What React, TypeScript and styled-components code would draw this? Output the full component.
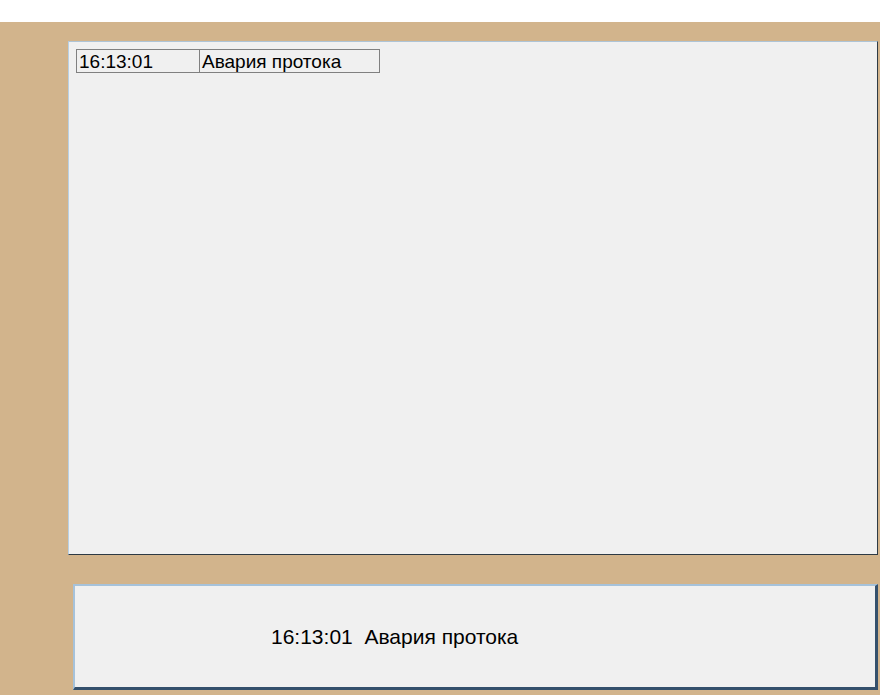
import React from "react";
import styled, { createGlobalStyle } from "styled-components";

const Global = createGlobalStyle`
  html, body { margin: 0; padding: 0; background: #ffffff; }
  body { font-family: "Liberation Sans", Arial, sans-serif; overflow: hidden; }
`;

const Screen = styled.div`
  width: 880px;
  height: 695px;
  display: flex;
  flex-direction: column;
  background: #ffffff;
`;

const Stage = styled.div`
  margin-top: 22px;
  flex: 1;
  background: #d2b48c;
  display: flex;
  flex-direction: column;
  padding: 19px 2px 0 68px;
`;

const LogPanel = styled.div`
  box-sizing: border-box;
  width: 810px;
  height: 514px;
  background: #f0f0f0;
  border-top: 1px solid #aec4d6;
  border-left: 1px solid #b8d0e4;
  border-right: 1px solid #2e3a44;
  border-bottom: 1px solid #2e3a44;
  padding: 7px 0 0 7px;
`;

const Table = styled.div`
  display: grid;
  grid-template-columns: 123px 181px;
  width: 304px;
  height: 24px;
  box-sizing: border-box;
  border: 1px solid #808080;
`;

const Cell = styled.div<{ $divider?: boolean }>`
  font-size: 19px;
  color: #000;
  line-height: 23px;
  padding-left: 2px;
  white-space: nowrap;
  overflow: hidden;
  border-right: ${(p) => (p.$divider ? "1px solid #808080" : "none")};
`;

const StatusPanel = styled.div`
  box-sizing: border-box;
  margin-top: 29px;
  margin-left: 5px;
  width: 805px;
  height: 106px;
  background: #f0f0f0;
  border-top: 2px solid #a6c2da;
  border-left: 2px solid #a6c2da;
  border-right: 3px solid #34506c;
  border-bottom: 3px solid #34506c;
  display: flex;
  align-items: center;
  padding-left: 196px;
`;

const StatusText = styled.div`
  font-size: 21px;
  color: #000;
  white-space: pre;
`;

export default function App() {
  return (
    <>
      <Global />
      <Screen>
        <Stage>
          <LogPanel>
            <Table>
              <Cell $divider>16:13:01</Cell>
              <Cell>Авария протока</Cell>
            </Table>
          </LogPanel>
          <StatusPanel>
            <StatusText>16:13:01  Авария протока</StatusText>
          </StatusPanel>
        </Stage>
      </Screen>
    </>
  );
}
